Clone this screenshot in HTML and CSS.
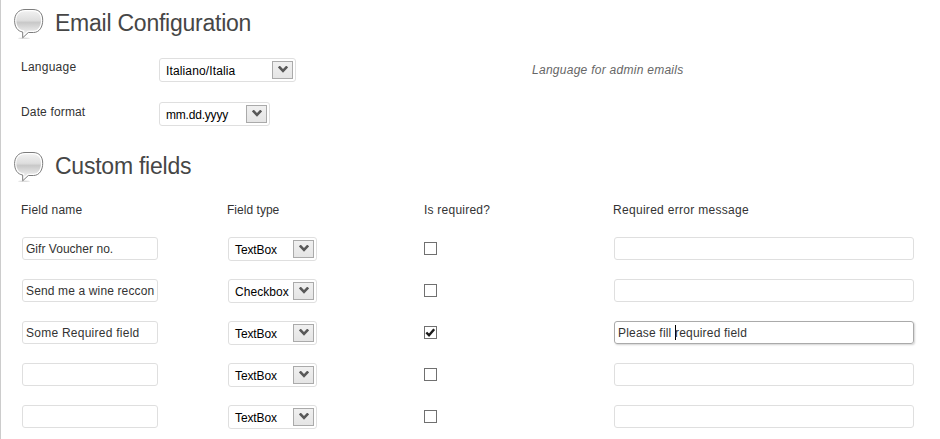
FILE: index.html
```html
<!DOCTYPE html>
<html lang="en">
<head>
<meta charset="utf-8">
<title>Settings</title>
<link rel="stylesheet" href="styles.css">
</head>
<body>
<svg width="0" height="0" class="defs" aria-hidden="true">
  <defs>
    <linearGradient id="gloss" x1="0" y1="0" x2="0" y2="1">
      <stop offset="0" stop-color="#f0f0f0"/><stop offset=".4" stop-color="#dedede"/>
      <stop offset=".5" stop-color="#c8c8c8"/><stop offset=".8" stop-color="#e2e2e2"/><stop offset="1" stop-color="#eee"/>
    </linearGradient>
    <symbol id="bubble" viewBox="0 0 32 32">
      <ellipse cx="10" cy="30.300" rx="6" ry=".8" fill="#ddd"/>
      <path d="M11 1.500H19C25.500 1.500 28.700 5.800 28.700 12.300S25.500 24.500 19.500 24.500H14.300L8.700 29.800V24C3.500 23.200 .6 18.900 .6 12.600S4.500 1.500 11 1.500Z" fill="#fff" stroke="#7c7c7c"/>
      <path d="M11 3.200H19C24.300 3.200 27 6.800 27 12.300S24.300 22.800 19.300 22.800H13.800L10.300 26V22.600C5 22 2.300 18.500 2.300 12.600S5.500 3.200 11 3.200Z" fill="url(#gloss)"/>
    </symbol>
    <symbol id="chevron" viewBox="0 0 10 7">
      <path d="M.8 .5L5 4.900L9.200 .5" fill="none" stroke="#585858" stroke-width="2.600"/>
    </symbol>
    <symbol id="check" viewBox="0 0 11 11">
      <path d="M1.300 5.500L4 8.200L9.200 2.200" fill="none" stroke="#1b1b1b" stroke-width="2.400"/>
    </symbol>
  </defs>
</svg>
<main class="page">
  <h2 class="heading"><svg class="bubble"><use href="#bubble"/></svg><span class="title-email">Email Configuration</span></h2>
  <div class="option">
    <span class="label language">Language</span>
    <div class="select wide"><span class="t-italiano">Italiano/Italia</span><i><svg><use href="#chevron"/></svg></i></div>
    <em class="hint">Language for admin emails</em>
  </div>
  <div class="option">
    <span class="label date">Date format</span>
    <div class="select date-select"><span class="t-date">mm.dd.yyyy</span><i><svg><use href="#chevron"/></svg></i></div>
  </div>
  <h2 class="heading custom"><svg class="bubble"><use href="#bubble"/></svg><span class="title-custom">Custom fields</span></h2>
  <div class="row head">
    <span class="h-name">Field name</span><span class="h-type">Field type</span><span class="h-req">Is required?</span><span class="h-err">Required error message</span>
  </div>
  <div class="row">
    <div class="input"><span class="t-gifr">Gifr Voucher no.</span></div>
    <div class="select"><span class="t-text">TextBox</span><i><svg><use href="#chevron"/></svg></i></div>
    <div class="box"></div><div class="input"></div>
  </div>
  <div class="row">
    <div class="input"><span class="t-send">Send me a wine reccon</span></div>
    <div class="select"><span class="t-check">Checkbox</span><i><svg><use href="#chevron"/></svg></i></div>
    <div class="box"></div><div class="input"></div>
  </div>
  <div class="row">
    <div class="input"><span class="t-some">Some Required field</span></div>
    <div class="select"><span class="t-text">TextBox</span><i><svg><use href="#chevron"/></svg></i></div>
    <div class="box"><svg><use href="#check"/></svg></div>
    <div class="input focus"><span class="t-please">Please fill <b class="caret"></b>required field</span></div>
  </div>
  <div class="row">
    <div class="input"></div>
    <div class="select"><span class="t-text">TextBox</span><i><svg><use href="#chevron"/></svg></i></div>
    <div class="box"></div><div class="input"></div>
  </div>
  <div class="row">
    <div class="input"></div>
    <div class="select"><span class="t-text">TextBox</span><i><svg><use href="#chevron"/></svg></i></div>
    <div class="box"></div><div class="input"></div>
  </div>
</main>
</body>
</html>
```
FILE: styles.css
```css
* { box-sizing: border-box; }
body { margin: 0; background: #fff; font: 12px/14px "Liberation Sans", Arial, sans-serif; color: #333; overflow: hidden; }
.defs { position: absolute; }
.page { height: 439px; border-left: 1px solid #ccc; padding-top: 8px; overflow: hidden; }
.heading { display: flex; margin: 0 0 18px 13px; height: 32px; font-size: 23px; font-weight: 400; line-height: 30px; color: #464646; }
.heading span { white-space: nowrap; }
.bubble { width: 32px; height: 32px; margin-right: 9px; flex: none; }
.option { display: grid; grid-template-columns: 138px 373px 1fr; height: 44px; margin-left: 20px; }
.label { padding-top: 2px; }
.option:nth-of-type(2) .label { padding-top: 3px; }
.hint { padding-top: 5px; color: #666; letter-spacing: .27px; }
.heading.custom { margin: 5px 0 20px 13px; height: 32px; }
.row { display: grid; grid-template-columns: 206px 196px 190px 300px; height: 42px; margin-left: 21px; align-items: start; }
.row.head { height: 34px; margin-left: 20px; grid-template-columns: 206px 197px 189px 300px; }
.input { height: 23px; width: 136px; border: 1px solid #dfdfdf; border-radius: 3px; padding: 4px 3px; white-space: nowrap; }
.box + .input { width: 300px; }
.input.focus { border-color: #aaa; box-shadow: 1px 1px 2px rgba(0, 0, 0, .18); }
.select { display: flex; justify-content: space-between; width: 89px; height: 24px; border: 1px solid #dfdfdf; border-radius: 3px; padding: 2px 2px 2px 6px; color: #000; white-space: nowrap; }
.select span { padding-top: 3px; }
.wide { width: 137px; }
.date-select { width: 111px; }
.select i { width: 21px; height: 18px; flex: none; border: 1px solid #aaa; background: linear-gradient(#f0f0f0, #e5e5e5); display: flex; justify-content: center; padding-top: 4px; }
.select i svg { width: 10px; height: 7px; }
.box { width: 13px; height: 13px; margin: 5px 0 0; border: 1px solid #707070; }
.box svg { display: block; width: 11px; height: 11px; }
.caret { display: inline-block; width: 1px; height: 15px; margin: -1px -1px -3px 0; background: #000; vertical-align: baseline; }
.title-email, .title-custom { letter-spacing: -.24px; }
.language { letter-spacing: .25px; }
.date { letter-spacing: .15px; }
.h-name { letter-spacing: .2px; }
.h-type { letter-spacing: .03px; }
.h-req { letter-spacing: .23px; }
.h-err { letter-spacing: .3px; }
.t-italiano { letter-spacing: .13px; }
.t-date { letter-spacing: -.2px; }
.t-text { letter-spacing: -.1px; }
.t-check { letter-spacing: .05px; }
.t-gifr { letter-spacing: .03px; }
.t-send { letter-spacing: .14px; }
.t-some { letter-spacing: .25px; }
.t-please { letter-spacing: .19px; }
```
